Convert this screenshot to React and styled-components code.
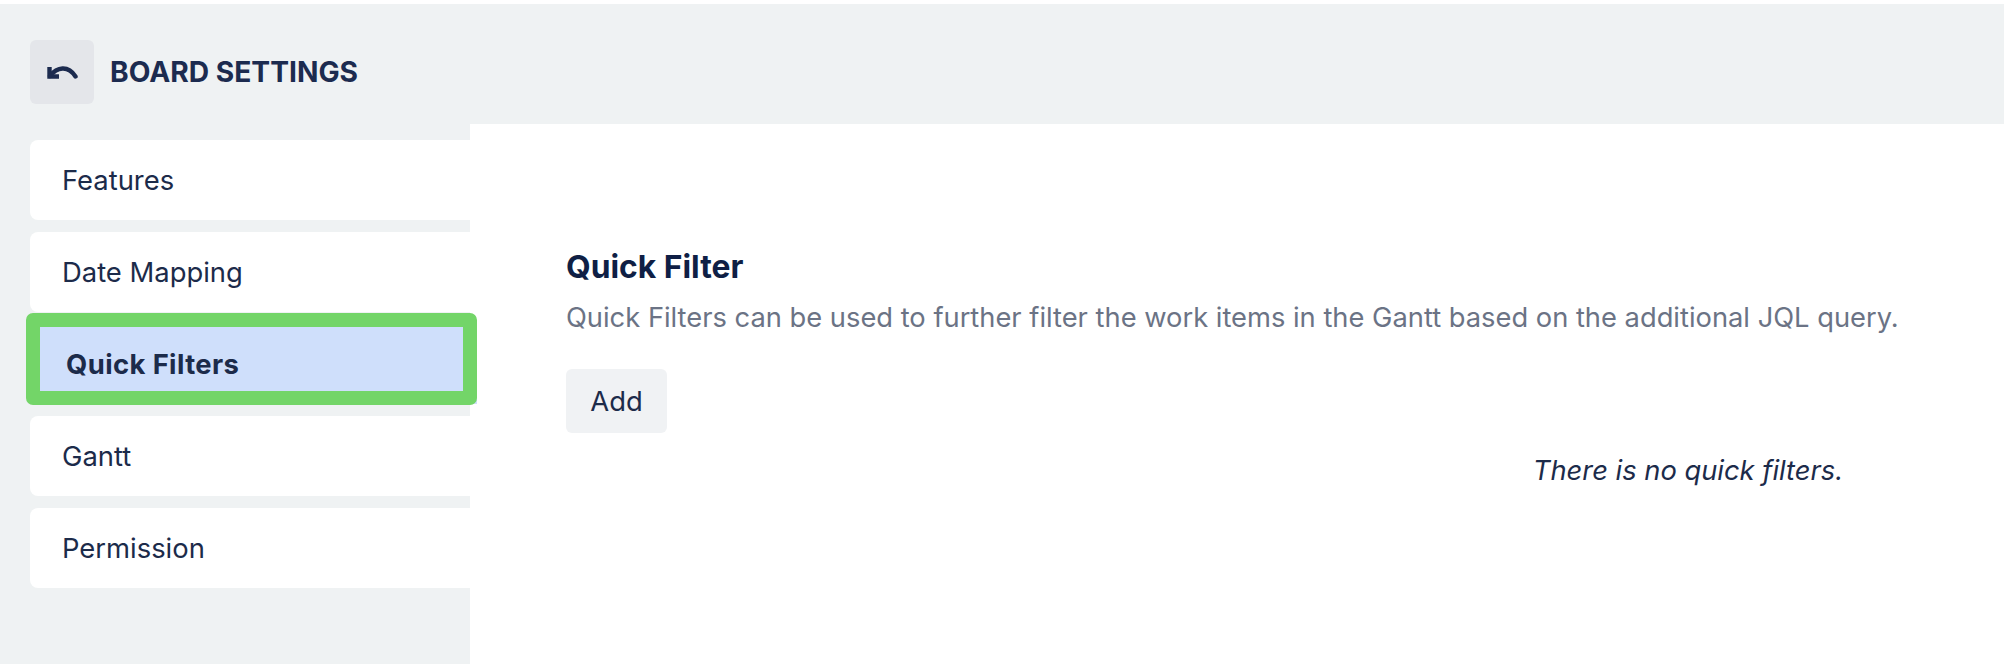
import React from 'react';
import styled, { createGlobalStyle } from 'styled-components';

const GlobalStyle = createGlobalStyle`
  html, body {
    margin: 0;
    padding: 0;
    background: #fff;
  }

  body {
    font-family: Inter, "Liberation Sans", sans-serif;
    color: #1c2b4a;
    overflow: hidden;
  }
`;

const Page = styled.div`
  margin-top: 4px;
  height: 660px;
  background: #eff2f3;
  display: flex;
  flex-direction: column;
  overflow: hidden;
`;

const Header = styled.header`
  display: flex;
  align-items: center;
  gap: 16px;
  padding: 36px 30px 0;
  margin-bottom: 20px;
`;

const BackButton = styled.button`
  width: 64px;
  height: 64px;
  padding: 0;
  border: none;
  border-radius: 6px;
  background: #e4e6ea;
  display: flex;
  align-items: center;
  justify-content: center;
`;

const Title = styled.h1`
  margin: 0;
  font-size: 28.2px;
  font-weight: 700;
  color: #1c2b4f;
`;

const Body = styled.div`
  flex: 1;
  display: grid;
  grid-template-columns: 470px 1fr;
`;

const Sidebar = styled.nav`
  display: flex;
  flex-direction: column;
  gap: 12px;
  padding: 16px 0 0 30px;
`;

const NavItem = styled.a`
  position: relative;
  z-index: ${(p) => (p.$active ? 1 : 0)};
  height: 80px;
  display: flex;
  align-items: center;
  padding-left: ${(p) => (p.$active ? '36px' : '32px')};
  margin-right: ${(p) => (p.$active ? '-7px' : '0')};
  border-radius: 8px 0 0 8px;
  background: ${(p) => (p.$active ? '#cfdffb' : '#fff')};
  font-size: 27.4px;
  font-weight: ${(p) => (p.$active ? 700 : 400)};
  letter-spacing: ${(p) => (p.$active ? '0.4px' : '0')};
  color: #1c2b4a;
`;

const Callout = styled.span`
  position: absolute;
  inset: -11px 0 -1px -4px;
  border: 14px solid #73d568;
  border-radius: 7px;
`;

const Panel = styled.main`
  background: #fff;
  padding: 121px 0 0 96px;
`;

const Heading = styled.h2`
  margin: 0 0 9px;
  font-size: 31.8px;
  line-height: 44px;
  font-weight: 700;
  color: #0f1f45;
`;

const Description = styled.p`
  margin: 0 0 31px;
  font-size: 27.3px;
  line-height: 40px;
  color: #6b7385;
`;

const AddButton = styled.button`
  width: 101px;
  height: 64px;
  padding: 0;
  border: none;
  border-radius: 6px;
  background: #f0f2f4;
  font: 400 27.4px Inter, sans-serif;
  color: #1c2b4a;
`;

const EmptyNote = styled.p`
  margin: 18px 0 0;
  padding-right: 161px;
  text-align: right;
  font-size: 27.3px;
  line-height: 40px;
  font-style: italic;
  color: #1c2b4a;
`;

const tabs = ['Features', 'Date Mapping', 'Quick Filters', 'Gantt', 'Permission'];

export default function App() {
  return (
    <>
      <GlobalStyle />
      <Page>
        <Header>
          <BackButton aria-label="Back">
            <svg width="32" height="32" viewBox="0 0 32 32" fill="none" stroke="#1c2b4f" strokeWidth="4.4">
              <path d="M3.5 11 V20.5 H13" />
              <path d="M4 20 C11 11 22 9 29.5 20.5" strokeLinecap="round" />
            </svg>
          </BackButton>
          <Title>BOARD SETTINGS</Title>
        </Header>
        <Body>
          <Sidebar>
            {tabs.map((tab) => (
              <NavItem key={tab} $active={tab === 'Quick Filters'}>
                {tab}
                {tab === 'Quick Filters' && <Callout />}
              </NavItem>
            ))}
          </Sidebar>
          <Panel>
            <Heading>Quick Filter</Heading>
            <Description>
              Quick Filters can be used to further filter the work items in the Gantt based on the additional JQL query.
            </Description>
            <AddButton>Add</AddButton>
            <EmptyNote>There is no quick filters.</EmptyNote>
          </Panel>
        </Body>
      </Page>
    </>
  );
}
